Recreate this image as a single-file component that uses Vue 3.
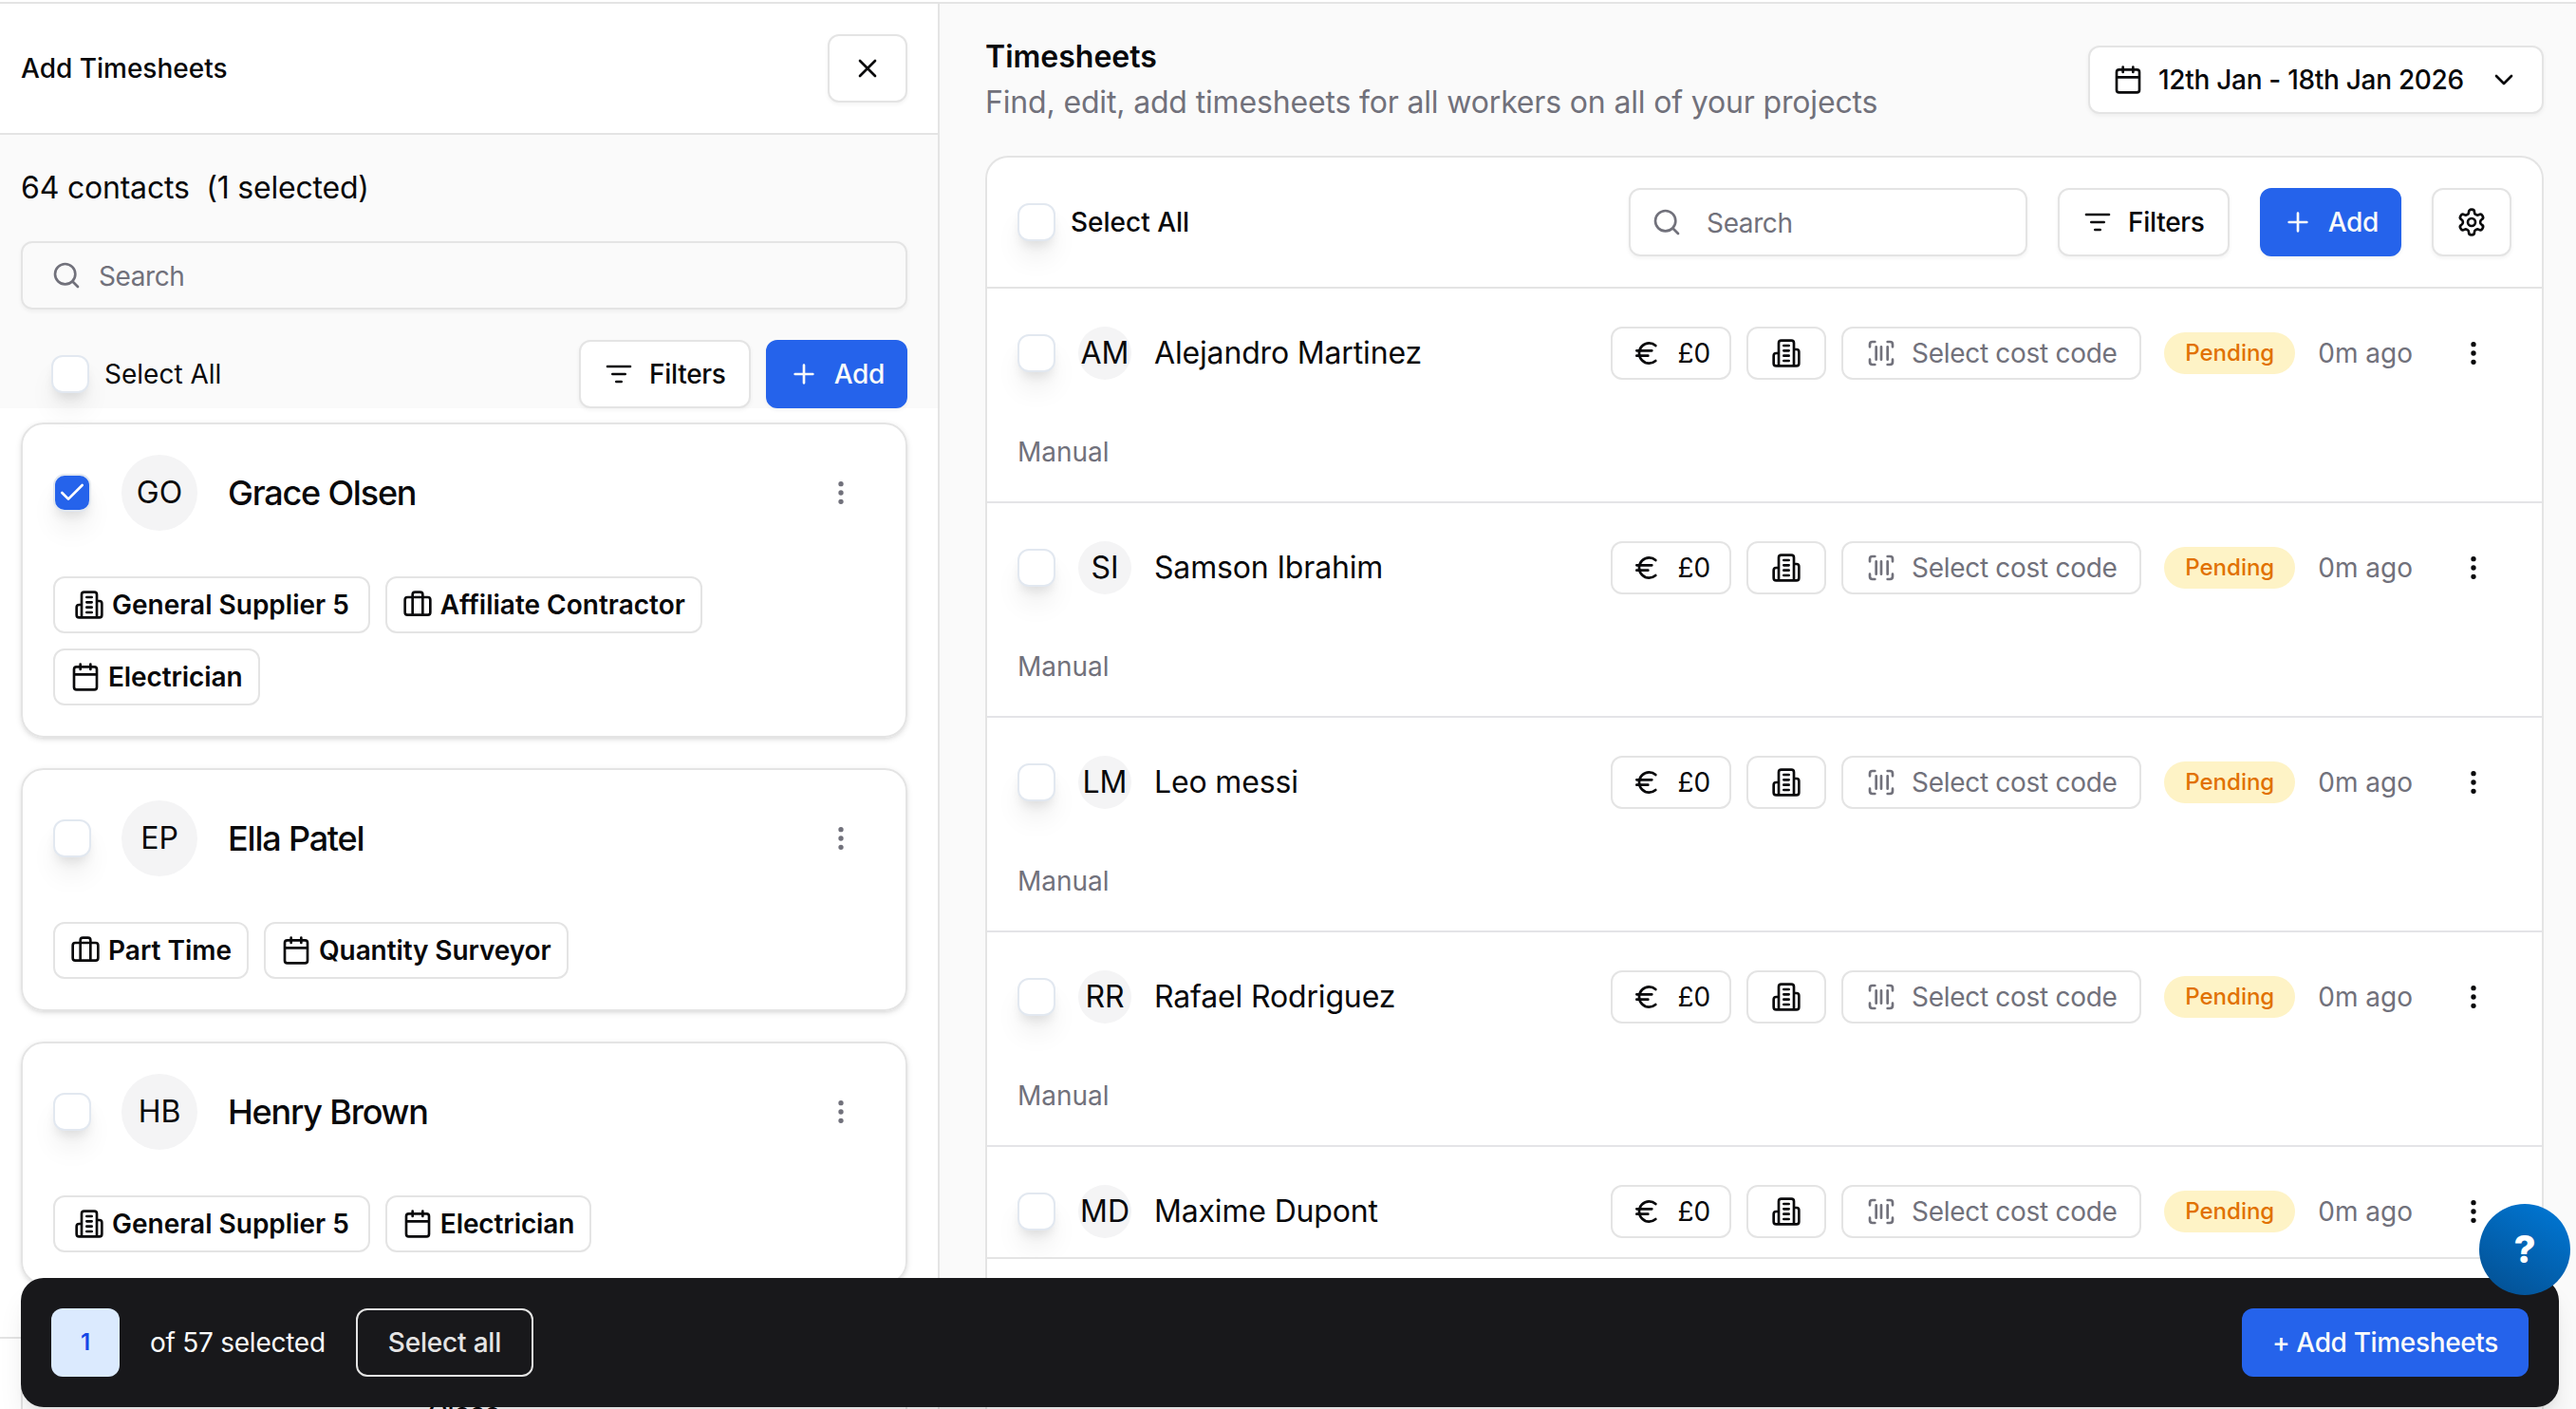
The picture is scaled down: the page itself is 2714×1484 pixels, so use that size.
<template>
  <div class="page">
    <div class="columns">
      <aside class="picker">
        <header class="picker-head">
          <h2 class="picker-title">Add Timesheets</h2>
          <button class="btn btn-square" aria-label="Close">
            <svg class="icon" viewBox="0 0 24 24"><path d="M18 6 6 18M6 6l12 12" /></svg>
          </button>
        </header>

        <div class="picker-tools">
          <p class="count">64 contacts&nbsp; (1 selected)</p>
          <div class="search search-wide">
            <svg class="icon" viewBox="0 0 24 24"><path :d="icons.search" /></svg>
            <span>Search</span>
          </div>
          <div class="picker-actions">
            <span class="check"></span>
            <span class="select-all">Select All</span>
            <button class="btn">
              <svg class="icon" viewBox="0 0 24 24"><path :d="icons.filter" /></svg>
              Filters
            </button>
            <button class="btn btn-primary">
              <svg class="icon" viewBox="0 0 24 24"><path :d="icons.plus" /></svg>
              Add
            </button>
          </div>
        </div>

        <div class="contacts">
          <article v-for="c in contacts" :key="c.name" class="contact">
            <div class="contact-top">
              <span class="check" :class="{ checked: c.checked }">
                <svg v-if="c.checked" class="tick" viewBox="0 0 24 24"><path d="M20 6 9 17l-5-5" /></svg>
              </span>
              <span class="avatar avatar-lg">{{ c.initials }}</span>
              <h3 class="contact-name">{{ c.name }}</h3>
              <svg class="kebab" viewBox="0 0 24 24"><path :d="icons.dots" /></svg>
            </div>
            <div class="tags">
              <span v-for="t in c.tags" :key="t.text" class="tag" :class="'tag-' + t.icon">
                <svg class="icon" viewBox="0 0 24 24"><path :d="icons[t.icon]" /></svg>
                {{ t.text }}
              </span>
            </div>
          </article>
        </div>
      </aside>

      <main class="main">
        <header class="main-head">
          <div class="main-titles">
            <h1 class="main-title">Timesheets</h1>
            <p class="main-sub">Find, edit, add timesheets for all workers on all of your projects</p>
          </div>
          <button class="btn btn-date">
            <svg class="icon" viewBox="0 0 24 24"><path :d="icons.calendar" /></svg>
            <span class="date-text">12th Jan - 18th Jan 2026</span>
            <svg class="icon" viewBox="0 0 24 24"><path d="m6 9 6 6 6-6" /></svg>
          </button>
        </header>

        <section class="panel">
          <div class="panel-tools">
            <span class="check"></span>
            <span class="select-all strong">Select All</span>
            <div class="search">
              <svg class="icon" viewBox="0 0 24 24"><path :d="icons.search" /></svg>
              <span>Search</span>
            </div>
            <button class="btn">
              <svg class="icon" viewBox="0 0 24 24"><path :d="icons.filter" /></svg>
              Filters
            </button>
            <button class="btn btn-primary">
              <svg class="icon" viewBox="0 0 24 24"><path :d="icons.plus" /></svg>
              Add
            </button>
            <button class="btn btn-square" aria-label="Settings">
              <svg class="icon" viewBox="0 0 24 24"><path :d="icons.gear" /><circle cx="12" cy="12" r="3" /></svg>
            </button>
          </div>

          <div class="rows">
            <div v-for="w in workers" :key="w.name" class="row">
              <div class="row-top">
                <span class="check"></span>
                <span class="avatar">{{ w.initials }}</span>
                <span class="row-name">{{ w.name }}</span>
                <span class="pill pill-money">
                  <svg class="icon" viewBox="0 0 24 24"><path :d="icons.euro" /></svg>
                  £0
                </span>
                <span class="pill pill-site">
                  <svg class="icon" viewBox="0 0 24 24"><path :d="icons.building" /></svg>
                </span>
                <span class="pill pill-code">
                  <svg class="icon" viewBox="0 0 24 24"><path :d="icons.barcode" /></svg>
                  Select cost code
                </span>
                <span class="status">Pending</span>
                <span class="ago">0m ago</span>
                <svg class="kebab" viewBox="0 0 24 24"><path :d="icons.dots" /></svg>
              </div>
              <p class="row-kind">Manual</p>
            </div>
          </div>
        </section>
      </main>
    </div>

    <!-- footer of the picker, mostly hidden by the selection bar -->
    <div class="under-line"></div>
    <div class="under-button">Close</div>

    <div class="selection-bar">
      <span class="selected-count">1</span>
      <span class="selected-text">of 57 selected</span>
      <button class="bar-outline">Select all</button>
      <button class="bar-primary">+ Add Timesheets</button>
    </div>

    <button class="help">?</button>
  </div>
</template>

<script setup>
const icons = {
  search: 'M19 11a8 8 0 1 1-16 0 8 8 0 0 1 16 0M21 21l-4.3-4.3',
  filter: 'M3 6h18M7 12h10M10 18h4',
  plus: 'M5 12h14M12 5v14',
  calendar: 'M8 2v4M16 2v4M5 4h14a2 2 0 0 1 2 2v14a2 2 0 0 1-2 2H5a2 2 0 0 1-2-2V6a2 2 0 0 1 2-2zM3 10h18',
  case: 'M16 20V4a2 2 0 0 0-2-2h-4a2 2 0 0 0-2 2v16M4 6h16a2 2 0 0 1 2 2v10a2 2 0 0 1-2 2H4a2 2 0 0 1-2-2V8a2 2 0 0 1 2-2z',
  building: 'M6 22V4a2 2 0 0 1 2-2h8a2 2 0 0 1 2 2v18ZM6 12H4a2 2 0 0 0-2 2v6a2 2 0 0 0 2 2h2M18 9h2a2 2 0 0 1 2 2v9a2 2 0 0 1-2 2h-2M10 6h4M10 10h4M10 14h4M10 18h4',
  euro: 'M4 10h12M4 14h9M19 6a7.7 7.7 0 0 0-5.2-2A7.9 7.9 0 0 0 6 12c0 4.4 3.5 8 7.8 8 2 0 3.8-.8 5.2-2',
  barcode: 'M3 7V5a2 2 0 0 1 2-2h2M17 3h2a2 2 0 0 1 2 2v2M21 17v2a2 2 0 0 1-2 2h-2M7 21H5a2 2 0 0 1-2-2v-2M8 7v10M12 7v10M17 7v10',
  dots: 'M12 5v.01M12 12v.01M12 19v.01',
  gear: 'M12.22 2h-.44a2 2 0 0 0-2 2v.18a2 2 0 0 1-1 1.73l-.43.25a2 2 0 0 1-2 0l-.15-.08a2 2 0 0 0-2.73.73l-.22.38a2 2 0 0 0 .73 2.73l.15.1a2 2 0 0 1 1 1.72v.51a2 2 0 0 1-1 1.74l-.15.09a2 2 0 0 0-.73 2.73l.22.38a2 2 0 0 0 2.73.73l.15-.08a2 2 0 0 1 2 0l.43.25a2 2 0 0 1 1 1.73V20a2 2 0 0 0 2 2h.44a2 2 0 0 0 2-2v-.18a2 2 0 0 1 1-1.73l.43-.25a2 2 0 0 1 2 0l.15.08a2 2 0 0 0 2.73-.73l.22-.39a2 2 0 0 0-.73-2.73l-.15-.08a2 2 0 0 1-1-1.74v-.5a2 2 0 0 1 1-1.74l.15-.09a2 2 0 0 0 .73-2.73l-.22-.38a2 2 0 0 0-2.73-.73l-.15.08a2 2 0 0 1-2 0l-.43-.25a2 2 0 0 1-1-1.73V4a2 2 0 0 0-2-2z',
}

const building = (text) => ({ icon: 'building', text })
const brief = (text) => ({ icon: 'case', text })
const trade = (text) => ({ icon: 'calendar', text })

const contacts = [
  { initials: 'GO', name: 'Grace Olsen', checked: true, tags: [building('General Supplier 5'), brief('Affiliate Contractor'), trade('Electrician')] },
  { initials: 'EP', name: 'Ella Patel', tags: [brief('Part Time'), trade('Quantity Surveyor')] },
  { initials: 'HB', name: 'Henry Brown', tags: [building('General Supplier 5'), trade('Electrician')] },
]

const workers = [
  { initials: 'AM', name: 'Alejandro Martinez' },
  { initials: 'SI', name: 'Samson Ibrahim' },
  { initials: 'LM', name: 'Leo messi' },
  { initials: 'RR', name: 'Rafael Rodriguez' },
  { initials: 'MD', name: 'Maxime Dupont' },
]
</script>

<style>
body {
  background: #fff;
}
</style>

<style scoped>
.page {
  position: relative;
  width: 2714px;
  height: 1484px;
  overflow: hidden;
  box-sizing: border-box;
  padding-top: 2px;
  font-family: Inter, "Liberation Sans", sans-serif;
  font-size: 28px;
  line-height: 40px;
  color: #09090b;
}
.page * {
  box-sizing: border-box;
}
h1, h2, h3, p {
  margin: 0;
  font-weight: 400;
}
button {
  font: inherit;
  color: inherit;
}
.columns {
  display: flex;
  height: 1482px;
  border-top: 2px solid #e4e4e4;
}

/* icons */
.icon,
.kebab,
.tick {
  flex: none;
  width: 32px;
  height: 32px;
  fill: none;
  stroke: currentColor;
  stroke-width: 2;
  stroke-linecap: round;
  stroke-linejoin: round;
}
.kebab {
  stroke-width: 4;
}

/* shared controls */
.btn {
  display: flex;
  align-items: center;
  justify-content: center;
  flex: none;
  height: 72px;
  padding: 0 24px;
  gap: 16px;
  background: #fff;
  border: 2px solid #e4e4e4;
  border-radius: 12px;
  box-shadow: 0 2px 4px rgba(0, 0, 0, 0.05);
  font-weight: 500;
  letter-spacing: -0.3px;
  white-space: nowrap;
}
.btn-primary {
  padding: 0 22px;
  background: #2563eb;
  border-color: #2563eb;
  color: #fafafa;
}
.btn-square {
  width: 84px;
  padding: 0;
}
.search {
  display: flex;
  align-items: center;
  flex: none;
  width: 420px;
  height: 72px;
  padding: 0 22px;
  gap: 26px;
  border: 2px solid #e4e4e4;
  border-radius: 12px;
  box-shadow: 0 2px 4px rgba(0, 0, 0, 0.05);
  color: #71717b;
  letter-spacing: -0.4px;
}
.search span {
  padding-top: 2px;
}
.check {
  display: flex;
  align-items: center;
  justify-content: center;
  flex: none;
  width: 40px;
  height: 40px;
  background: #fff;
  border: 2px solid #e2e8f0;
  border-radius: 12px;
  box-shadow: 0 20px 30px -6px rgba(0, 0, 0, 0.1), 0 8px 12px -4px rgba(0, 0, 0, 0.1);
}
.check.checked {
  background: #2563eb;
  color: #fff;
}
.avatar {
  display: flex;
  align-items: center;
  justify-content: center;
  flex: none;
  width: 56px;
  height: 56px;
  border-radius: 50%;
  background: #f4f4f5;
  font-size: 32px;
  line-height: 48px;
}

/* left panel */
.picker {
  flex: none;
  width: 990px;
  border-right: 2px solid #e4e4e4;
  background: #fff;
}
.picker-head {
  display: flex;
  align-items: center;
  justify-content: space-between;
  height: 138px;
  padding: 0 32px 0 22px;
  border-bottom: 2px solid #e4e4e4;
}
.picker-title {
  font-size: 28px;
  font-weight: 500;
}
.picker-tools {
  height: 288px;
  padding: 32px 32px 0 22px;
  background: #fafafa;
}
.count {
  font-size: 32px;
  line-height: 48px;
  letter-spacing: -0.2px;
}
.search-wide {
  width: 934px;
  margin-top: 32px;
  padding: 0 30px;
  gap: 18px;
}
.picker-actions {
  display: flex;
  align-items: center;
  margin-top: 32px;
  padding-left: 32px;
}
.select-all {
  margin: 0 auto 0 16px;
}
.strong {
  font-weight: 500;
}
.picker-actions .btn-primary {
  margin-left: 16px;
}
.contacts {
  display: flex;
  flex-direction: column;
  gap: 32px;
  padding: 15px 32px 0 22px;
}
.contact {
  padding: 32px;
  border: 2px solid #e4e4e4;
  border-radius: 24px;
  box-shadow: 0 2px 6px rgba(0, 0, 0, 0.1), 0 2px 4px -2px rgba(0, 0, 0, 0.1);
}
.contact-top {
  display: flex;
  align-items: center;
}
.avatar-lg {
  width: 80px;
  height: 80px;
  margin: 0 32px;
}
.contact-name {
  font-size: 36px;
  font-weight: 500;
  letter-spacing: -1.2px;
}
.contact .kebab {
  margin: 0 20px 0 auto;
  color: #71717b;
}
.tags {
  display: flex;
  flex-wrap: wrap;
  gap: 16px;
  margin-top: 48px;
}
.tag {
  display: flex;
  align-items: center;
  height: 60px;
  padding: 0 16px;
  gap: 8px;
  border: 2px solid #e4e4e4;
  border-radius: 12px;
  font-weight: 600;
  white-space: nowrap;
}
.tag-building {
  padding: 0 20px;
}
.tag-calendar {
  letter-spacing: -0.1px;
}

/* right side */
.main {
  flex: 1;
  display: flex;
  flex-direction: column;
  padding: 30px 34px 0 48px;
  background: #fafafa;
}
.main-head {
  display: flex;
  justify-content: space-between;
  height: 130px;
}
.main-title {
  font-size: 32px;
  font-weight: 600;
  line-height: 52px;
}
.main-sub {
  margin-top: -2px;
  font-size: 32px;
  line-height: 48px;
  letter-spacing: -0.16px;
  color: #71717b;
}
.btn-date {
  margin-top: 14px;
  width: 480px;
  gap: 0;
}
.date-text {
  margin: 0 auto 0 16px;
}
.panel {
  flex: 1;
  border: 2px solid #e4e4e4;
  border-bottom: 0;
  border-radius: 24px 24px 0 0;
  background: #fff;
}
.panel-tools {
  display: flex;
  align-items: center;
  height: 138px;
  padding: 0 32px;
  border-bottom: 2px solid #e4e4e4;
}
.panel-tools .btn {
  margin-left: 32px;
}
.rows {
  height: 1022px;
  overflow: hidden;
  border-bottom: 2px solid #e4e4e4;
}
.row {
  height: 226px;
  padding: 40px 32px 0;
  border-bottom: 2px solid #e4e4e7;
}
.row-top {
  display: flex;
  align-items: center;
}
.row-top .avatar {
  margin: 0 24px;
}
.row-name {
  margin-right: auto;
  font-size: 32px;
  letter-spacing: -0.16px;
}
.pill {
  display: flex;
  align-items: center;
  justify-content: center;
  height: 56px;
  margin-right: 16px;
  border: 2px solid #e4e4e4;
  border-radius: 12px;
  white-space: nowrap;
}
.pill-money {
  width: 127px;
  gap: 16px;
}
.pill-site {
  width: 84px;
}
.pill-code {
  width: 316px;
  gap: 16px;
  margin-right: 24px;
  color: #71717b;
  letter-spacing: -0.3px;
}
.status {
  height: 44px;
  padding: 0 22px;
  border-radius: 22px;
  background: #fef3c6;
  color: #e17100;
  font-size: 24px;
  font-weight: 500;
  line-height: 44px;
}
.ago {
  margin: 0 48px 0 24px;
  color: #71717b;
}
.row-top .kebab {
  margin-right: 24px;
}
.row-kind {
  margin-top: 56px;
  color: #71717b;
}

.under-line {
  position: absolute;
  left: 0;
  top: 1408px;
  width: 988px;
  height: 2px;
  background: #e4e4e4;
}
.under-button {
  position: absolute;
  left: 22px;
  top: 1452px;
  width: 934px;
  height: 72px;
  border: 2px solid #e4e4e4;
  border-radius: 12px;
  text-align: center;
  line-height: 68px;
  font-weight: 500;
}

.selection-bar {
  position: absolute;
  left: 22px;
  top: 1346px;
  width: 2674px;
  height: 136px;
  display: flex;
  align-items: center;
  padding: 0 32px;
  border-radius: 24px;
  background: #18181b;
  color: #fafafa;
  box-shadow: 0 20px 30px -6px rgba(0, 0, 0, 0.1), 0 8px 12px -4px rgba(0, 0, 0, 0.06);
}
.selected-count {
  width: 72px;
  height: 72px;
  border-radius: 12px;
  background: #dbeafe;
  color: #1447e6;
  font-size: 24px;
  font-weight: 600;
  line-height: 72px;
  text-align: center;
}
.selected-text {
  margin: 0 32px;
  letter-spacing: -0.25px;
}
.bar-outline {
  height: 72px;
  padding: 0 32px;
  border: 2px solid #e4e4e4;
  border-radius: 12px;
  background: none;
  color: #e4e4e4;
  font-weight: 500;
  letter-spacing: -0.2px;
}
.bar-primary {
  height: 72px;
  margin-left: auto;
  padding: 0 32px;
  border: 0;
  border-radius: 12px;
  background: #2563eb;
  font-weight: 500;
  letter-spacing: -0.35px;
}

.help {
  position: absolute;
  left: 2612px;
  top: 1268px;
  width: 96px;
  height: 96px;
  border: 0;
  border-radius: 50%;
  background: linear-gradient(30deg, #044e8f, #0079d8);
  color: #fff;
  font-size: 40px;
  font-weight: 800;
}
</style>
